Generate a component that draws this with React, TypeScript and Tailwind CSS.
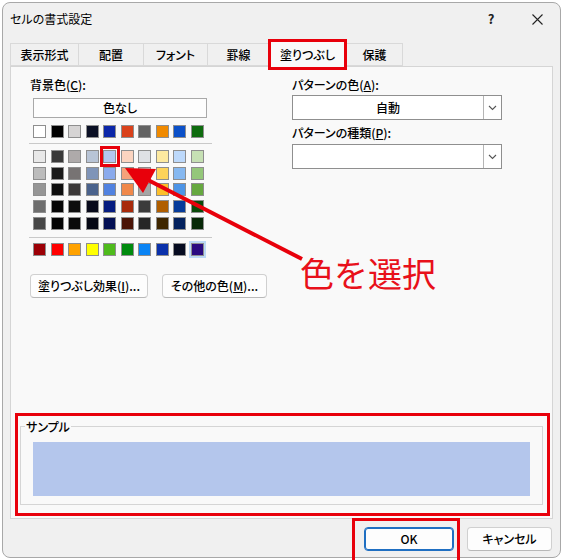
import React from 'react';

const jp = { fontFamily: '"Noto Sans CJK JP", "Noto Sans", sans-serif' };

const themeRow = ['#ffffff', '#000000', '#d6d4d4', '#0a0f24', '#0b26a8', '#d9411b', '#626262', '#f08a00', '#0b50c8', '#0e6b0e'];

const shades = [
  ['#e8e8e8', '#393939', '#aeaaaa', '#b8c4d6', '#b4c6f0', '#fcd4c0', '#dfe1e5', '#fde9a0', '#bdd9fb', '#c6e0b4'],
  ['#bcbcbc', '#1a1a1a', '#777373', '#7f94b8', '#8aaaec', '#f5a27a', '#bfbfbf', '#fdd35a', '#86b8f0', '#94c77a'],
  ['#969696', '#0d0d0d', '#3b3838', '#4a628c', '#5182e0', '#f0884a', '#a5a5a5', '#fcbf2a', '#4d94e6', '#66a840'],
  ['#6e6e6e', '#050505', '#0e0e0e', '#07091a', '#061c80', '#a82a0b', '#3b3b3b', '#b05e00', '#063b9a', '#0a4a0a'],
  ['#474747', '#030303', '#0a0a0a', '#050714', '#041054', '#4a1306', '#262626', '#3e2600', '#04225e', '#072807'],
];

const standard = ['#9c0006', '#ff0000', '#ffa200', '#ffff00', '#4fbb1c', '#008a0e', '#0a84f5', '#0a30aa', '#060b20', '#2a0a80'];

const tabs = [
  { label: '表示形式', w: 'w-[68px]' },
  { label: '配置', w: 'w-[65px]' },
  { label: 'フォント', w: 'w-[64px]' },
  { label: '罫線', w: 'w-[62px]' },
  { label: '塗りつぶし', w: 'w-[77px]', active: true },
  { label: '保護', w: 'w-[57px]' },
];

const Swatch: React.FC<{ color: string; focus?: boolean }> = ({ color, focus }) => (
  <div
    className={
      'w-[13px] h-[13px] border border-[#8e8e8e] ' +
      (focus ? 'outline-2 outline-[#bcd9f5]' : '')
    }
    style={{ backgroundColor: color }}
  />
);

const Row: React.FC<{ colors: string[]; last?: boolean }> = ({ colors, last }) => (
  <div className="grid grid-cols-[repeat(10,13px)] gap-x-[4.5px]">
    {colors.map((c, i) => (
      <Swatch key={i} color={c} focus={last && i === 9} />
    ))}
  </div>
);

const Chevron = () => (
  <svg width="9" height="6" viewBox="0 0 9 6" fill="none">
    <path d="M1 1l3.5 3.5L8 1" stroke="#555" strokeWidth="1.1" />
  </svg>
);

const Dropdown: React.FC<{ value?: string }> = ({ value }) => (
  <div className="flex w-[210px] h-[25px] border border-[#8f8f8f] bg-white">
    <div className="flex-1 flex items-center justify-center text-[12px] font-medium text-black">{value}</div>
    <div className="w-[18px] border-l border-[#b5b5b5] flex items-center justify-center">
      <Chevron />
    </div>
  </div>
);

const Btn: React.FC<{ w: string; children: React.ReactNode; primary?: boolean }> = ({ w, children, primary }) => (
  <div
    className={
      w +
      ' shrink-0 h-[24px] flex items-center justify-center whitespace-nowrap rounded-[4px] bg-[#fdfdfd] text-[12px] font-medium text-black ' +
      (primary ? 'border border-[#1f6fc2] shadow-[inset_0_0_0_1px_#1f6fc2]' : 'border border-[#d0d0d0] border-b-[#b8b8b8]')
    }
  >
    {children}
  </div>
);

export default function App() {
  return (
    <div
      className="relative w-[562px] h-[560px] overflow-hidden bg-white p-[2px] [font-feature-settings:'palt']"
      style={jp}
    >
      <div className="w-[559px] h-[556px] rounded-[8px] border border-[#a8a8a8] bg-[#f0f0f0] flex flex-col">
        {/* title bar */}
        <div className="h-[32px] flex items-center">
          <div className="pl-[7px] flex-1 text-[12px] text-black">セルの書式設定</div>
          <div className="w-[46px] h-full flex items-center justify-center text-[13px] font-bold text-[#222]">?</div>
          <div className="w-[46px] h-full flex items-center justify-center">
            <svg width="11" height="11" viewBox="0 0 11 11">
              <path d="M0.5 0.5l10 10M10.5 0.5l-10 10" stroke="#222" strokeWidth="1.1" />
            </svg>
          </div>
        </div>

        {/* tabs */}
        <div className="mt-[6px] h-[25px] pl-[7px] flex items-end">
          {tabs.map((t) =>
            t.active ? (
              <div
                key={t.label}
                className={t.w + ' h-[26px] mb-[-1px] relative z-10 flex items-center justify-center bg-[#f9f9f9] border border-b-0 border-[#d5d5d5] text-[12px] font-medium text-black'}
              >
                {t.label}
              </div>
            ) : (
              <div
                key={t.label}
                className={t.w + ' h-[23px] flex items-center justify-center bg-[#f0f0f0] border border-r-0 border-[#d9d9d9] text-[12px] font-medium text-black last:border-r'}
              >
                {t.label}
              </div>
            )
          )}
        </div>

        {/* panel */}
        <div className="mx-[7px] h-[453px] border border-[#d5d5d5] bg-[#f9f9f9] pt-[10px]">
          <div className="flex pl-[19px]">
            <div className="w-[190px] flex flex-col">
              <div className="text-[12px] leading-[16px] font-medium text-black">
                背景色(<span className="underline">C</span>):
              </div>
              <div className="ml-[3px] mt-[5px] w-[174px] h-[20px] border border-[#a9a9a9] bg-[#fdfdfd] flex items-center justify-center text-[12px] font-medium text-black">
                色なし
              </div>
              <div className="ml-[3px] mt-[7px]">
                <Row colors={themeRow} />
              </div>
              <div className="ml-[-1px] mt-[5px] w-[183px] h-px bg-[#c9c9c9]" />
              <div className="ml-[3px] mt-[6px] flex flex-col gap-y-[3.7px]">
                {shades.map((r, i) => (
                  <Row key={i} colors={r} />
                ))}
              </div>
              <div className="ml-[-1px] mt-[7px] w-[183px] h-px bg-[#c9c9c9]" />
              <div className="ml-[3px] mt-[5px]">
                <Row colors={standard} last />
              </div>
              <div className="mt-[18px] flex gap-[14px]">
                <Btn w="w-[118px]">
                  塗りつぶし効果(<span className="underline">I</span>)...
                </Btn>
                <Btn w="w-[105px]">
                  その他の色(<span className="underline">M</span>)...
                </Btn>
              </div>
            </div>

            <div className="ml-[72px] w-[210px] flex flex-col">
              <div className="text-[12px] leading-[16px] font-medium text-black">
                パターンの色(<span className="underline">A</span>):
              </div>
              <div className="mt-[2px]">
                <Dropdown value="自動" />
              </div>
              <div className="mt-[5px] text-[12px] leading-[16px] font-medium text-black">
                パターンの種類(<span className="underline">P</span>):
              </div>
              <div className="mt-[3px]">
                <Dropdown />
              </div>
            </div>
          </div>

          <fieldset className="mt-[121px] ml-[9px] w-[523px] border border-[#d5d5d5] pb-[8px]">
            <legend className="ml-[4px] px-[1px] text-[12px] leading-[16px] font-medium text-black">サンプル</legend>
            <div className="ml-[12px] mt-[7px] w-[497px] h-[54px] bg-[#b4c6ec]" />
          </fieldset>
        </div>

        {/* footer */}
        <div className="mt-[8px] pr-[8px] flex justify-end gap-[13px]">
          <Btn w="w-[90px]" primary>
            OK
          </Btn>
          <Btn w="w-[85px]">キャンセル</Btn>
        </div>
      </div>

      {/* annotations */}
      <div className="absolute left-[268px] top-[39px] w-[79px] h-[31px] border-[3px] border-[#e8000b] z-20" />
      <div className="absolute left-[100px] top-[146px] w-[20px] h-[21px] border-[3px] border-[#e8000b] z-20" />
      <div className="absolute left-[15px] top-[413px] w-[535px] h-[103px] border-[3px] border-[#e8000b] z-20" />
      <div className="absolute left-[352px] top-[518px] w-[108px] h-[50px] border-[3px] border-[#e8000b] z-20" />
      <svg className="absolute left-0 top-0 z-20" width="562" height="560" viewBox="0 0 562 560">
        <line x1="302" y1="259" x2="148" y2="180" stroke="#e8000b" strokeWidth="4" />
        <polygon points="125,168 156,169 143,193" fill="#e8000b" />
      </svg>
      <div className="absolute left-[300px] top-[253px] z-20 text-[34px] leading-[40px] text-[#e8101a] [font-feature-settings:normal]">
        色を選択
      </div>
    </div>
  );
}
